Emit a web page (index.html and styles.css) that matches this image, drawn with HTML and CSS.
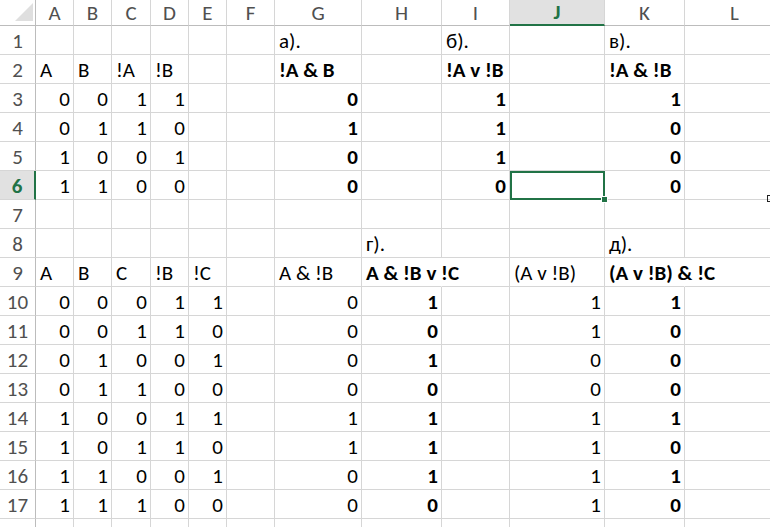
FILE: index.html
```html
<!DOCTYPE html>
<html lang="ru">
  <head>
    <meta charset="utf-8">
    <title>Таблицы истинности</title>
    <link rel="stylesheet" href="styles.css">
  </head>
  <body>
    <div class="sheet-wrap">
      <table class="sheet">
        <colgroup>
          <col class="w-rh">
          <col class="w-a"><col class="w-b"><col class="w-c"><col class="w-d"><col class="w-e"><col class="w-f">
          <col class="w-g"><col class="w-h"><col class="w-i"><col class="w-j"><col class="w-k"><col class="w-l">
        </colgroup>
        <tr class="col-heads">
          <th class="corner">
            <svg width="36" height="25" viewBox="0 0 36 25"><polygon points="33,3 33,21 15,21" fill="#dfdfdf"/></svg>
          </th>
          <th>A</th><th>B</th><th>C</th><th>D</th><th>E</th><th>F</th>
          <th>G</th><th>H</th><th>I</th><th class="active">J</th><th>K</th><th>L</th>
        </tr>
        <tr>
          <th class="rh">1</th>
          <td></td><td></td><td></td><td></td><td></td><td></td>
          <td>а).</td><td></td><td>б).</td><td></td><td>в).</td><td></td>
        </tr>
        <tr>
          <th class="rh">2</th>
          <td>A</td><td>B</td><td>!A</td><td>!B</td><td></td><td></td>
          <td class="b">!A &amp; B</td><td></td><td class="b">!A v !B</td><td></td><td class="b">!A &amp; !B</td><td></td>
        </tr>
        <tr>
          <th class="rh">3</th>
          <td class="n">0</td><td class="n">0</td><td class="n">1</td><td class="n">1</td><td></td><td></td>
          <td class="n b">0</td><td></td><td class="n b">1</td><td></td><td class="n b">1</td><td></td>
        </tr>
        <tr>
          <th class="rh">4</th>
          <td class="n">0</td><td class="n">1</td><td class="n">1</td><td class="n">0</td><td></td><td></td>
          <td class="n b">1</td><td></td><td class="n b">1</td><td></td><td class="n b">0</td><td></td>
        </tr>
        <tr>
          <th class="rh">5</th>
          <td class="n">1</td><td class="n">0</td><td class="n">0</td><td class="n">1</td><td></td><td></td>
          <td class="n b">0</td><td></td><td class="n b">1</td><td></td><td class="n b">0</td><td></td>
        </tr>
        <tr>
          <th class="rh active">6</th>
          <td class="n">1</td><td class="n">1</td><td class="n">0</td><td class="n">0</td><td></td><td></td>
          <td class="n b">0</td><td></td><td class="n b">0</td><td class="sel"><span class="handle"></span></td><td class="n b">0</td><td></td>
        </tr>
        <tr>
          <th class="rh">7</th>
          <td></td><td></td><td></td><td></td><td></td><td></td>
          <td></td><td></td><td></td><td></td><td></td><td></td>
        </tr>
        <tr>
          <th class="rh">8</th>
          <td></td><td></td><td></td><td></td><td></td><td></td>
          <td></td><td>г).</td><td></td><td></td><td>д).</td><td></td>
        </tr>
        <tr>
          <th class="rh">9</th>
          <td>A</td><td>B</td><td>C</td><td>!B</td><td>!C</td><td></td>
          <td>A &amp; !B</td><td class="b spill">A &amp; !B v !C</td><td></td><td>(A v !B)</td><td class="b spill">(A v !B) &amp; !C</td><td></td>
        </tr>
        <tr>
          <th class="rh">10</th>
          <td class="n">0</td><td class="n">0</td><td class="n">0</td><td class="n">1</td><td class="n">1</td><td></td>
          <td class="n">0</td><td class="n b">1</td><td></td><td class="n">1</td><td class="n b">1</td><td></td>
        </tr>
        <tr>
          <th class="rh">11</th>
          <td class="n">0</td><td class="n">0</td><td class="n">1</td><td class="n">1</td><td class="n">0</td><td></td>
          <td class="n">0</td><td class="n b">0</td><td></td><td class="n">1</td><td class="n b">0</td><td></td>
        </tr>
        <tr>
          <th class="rh">12</th>
          <td class="n">0</td><td class="n">1</td><td class="n">0</td><td class="n">0</td><td class="n">1</td><td></td>
          <td class="n">0</td><td class="n b">1</td><td></td><td class="n">0</td><td class="n b">0</td><td></td>
        </tr>
        <tr>
          <th class="rh">13</th>
          <td class="n">0</td><td class="n">1</td><td class="n">1</td><td class="n">0</td><td class="n">0</td><td></td>
          <td class="n">0</td><td class="n b">0</td><td></td><td class="n">0</td><td class="n b">0</td><td></td>
        </tr>
        <tr>
          <th class="rh">14</th>
          <td class="n">1</td><td class="n">0</td><td class="n">0</td><td class="n">1</td><td class="n">1</td><td></td>
          <td class="n">1</td><td class="n b">1</td><td></td><td class="n">1</td><td class="n b">1</td><td></td>
        </tr>
        <tr>
          <th class="rh">15</th>
          <td class="n">1</td><td class="n">0</td><td class="n">1</td><td class="n">1</td><td class="n">0</td><td></td>
          <td class="n">1</td><td class="n b">1</td><td></td><td class="n">1</td><td class="n b">0</td><td></td>
        </tr>
        <tr>
          <th class="rh">16</th>
          <td class="n">1</td><td class="n">1</td><td class="n">0</td><td class="n">0</td><td class="n">1</td><td></td>
          <td class="n">0</td><td class="n b">1</td><td></td><td class="n">1</td><td class="n b">1</td><td></td>
        </tr>
        <tr>
          <th class="rh">17</th>
          <td class="n">1</td><td class="n">1</td><td class="n">1</td><td class="n">0</td><td class="n">0</td><td></td>
          <td class="n">0</td><td class="n b">0</td><td></td><td class="n">1</td><td class="n b">0</td><td></td>
        </tr>
        <tr>
          <th class="rh"></th>
          <td></td><td></td><td></td><td></td><td></td><td></td>
          <td></td><td></td><td></td><td></td><td></td><td></td>
        </tr>
      </table>
      <span class="quick"></span>
    </div>
  </body>
</html>
```

FILE: styles.css
```css
body {
  margin: 0;
  overflow: hidden;
  background: #fff;
  font-family: Carlito, 'Liberation Sans', Arial, sans-serif;
  color: #000;
}

.sheet-wrap {
  position: relative;
  width: 770px;
  height: 527px;
  overflow: hidden;
}

.sheet {
  border-collapse: separate;
  border-spacing: 0;
  table-layout: fixed;
  width: 785px;
  font-size: 21px;
}

.w-rh { width: 36px; }
.w-a { width: 38px; }
.w-b { width: 38px; }
.w-c { width: 39px; }
.w-d { width: 38px; }
.w-e { width: 38px; }
.w-f { width: 48px; }
.w-g { width: 87px; }
.w-h { width: 80px; }
.w-i { width: 68px; }
.w-j { width: 95px; }
.w-k { width: 80px; }
.w-l { width: 100px; }

.sheet td,
.sheet th {
  box-sizing: border-box;
  height: 29px;
  padding: 0 3px 2px 4px;
  line-height: 22px;
  border-right: 1px solid #d6d6d6;
  border-bottom: 1px solid #d6d6d6;
  vertical-align: bottom;
  text-align: left;
  white-space: nowrap;
  font-weight: normal;
}

.col-heads th {
  height: 25px;
  padding: 0;
  vertical-align: middle;
  text-align: center;
  color: #505050;
  border-bottom-color: #bcbcbc;
}

.col-heads th.corner {
  position: relative;
  padding: 0;
  border-right-color: #bcbcbc;
}

.corner svg {
  display: block;
}

.sheet th.rh {
  padding: 0 0 2px;
  text-align: center;
  color: #505050;
  border-right-color: #bcbcbc;
}

.sheet th.active {
  background: #e1e1e1;
  color: #217346;
  font-weight: bold;
}

.col-heads th.active {
  border-bottom: 2px solid #217346;
}

.sheet th.rh.active {
  border-right: 2px solid #217346;
}

.sheet td.n {
  text-align: right;
}

.sheet td.b {
  font-weight: bold;
}

.sheet td.spill {
  border-right-color: transparent;
}

.sheet td.sel {
  position: relative;
}

.sel::after {
  content: '';
  position: absolute;
  top: 0;
  left: 0;
  right: -1px;
  bottom: -1px;
  border: 2px solid #217346;
}

.handle {
  position: absolute;
  right: -4px;
  bottom: -4px;
  width: 5px;
  height: 5px;
  background: #217346;
  border: 1px solid #fff;
  z-index: 1;
}

.quick {
  position: absolute;
  left: 767px;
  top: 195px;
  width: 4px;
  height: 5px;
  border: 1px solid #222;
  border-right: 0;
}
```
